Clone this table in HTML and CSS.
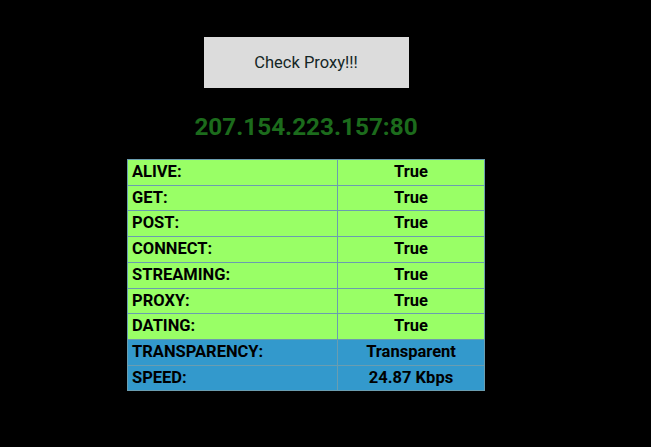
FILE: index.html
```html
<!DOCTYPE html>
<html>
<head>
<meta charset="utf-8">
<link rel="stylesheet" href="styles.css">
</head>
<body>
<div class="wrap">
  <button class="check">Check Proxy!!!</button>
  <h2 class="ip">207.154.223.157:80</h2>
  <table class="results">
    <tr class="ok"><td>ALIVE:</td><td class="val">True</td></tr>
    <tr class="ok"><td>GET:</td><td class="val">True</td></tr>
    <tr class="ok"><td>POST:</td><td class="val">True</td></tr>
    <tr class="ok"><td>CONNECT:</td><td class="val">True</td></tr>
    <tr class="ok"><td>STREAMING:</td><td class="val">True</td></tr>
    <tr class="ok"><td>PROXY:</td><td class="val">True</td></tr>
    <tr class="ok"><td>DATING:</td><td class="val">True</td></tr>
    <tr class="info"><td>TRANSPARENCY:</td><td class="val">Transparent</td></tr>
    <tr class="info"><td>SPEED:</td><td class="val">24.87 Kbps</td></tr>
  </table>
</div>
</body>
</html>
```
FILE: styles.css
```css
html, body {
  background: #000;
}
body {
  margin: 8px;
  font-family: Roboto, "Liberation Sans", sans-serif;
}
.wrap {
  width: 596px;
  padding-top: 29px;
  display: flex;
  flex-direction: column;
  align-items: center;
}
.check {
  width: 205px;
  height: 51px;
  background: #dcdcdc;
  border: none;
  font-family: Roboto, "Liberation Sans", sans-serif;
  font-size: 16.5px;
  color: #142626;
  padding: 0;
}
.ip {
  margin: 22px 0 16px;
  font-size: 24.3px;
  line-height: 33px;
  font-weight: 700;
  color: #1c6b1c;
}
.results {
  border-collapse: collapse;
  width: 358px;
}
.results td {
  border: 1px solid #6a9db0;
  padding: 3px 4px;
  line-height: 18.7px;
  font-size: 16.5px;
  font-weight: 700;
  color: #000;
  width: 201px;
}
.results td.val {
  text-align: center;
  width: auto;
}
.ok td {
  background: #99ff66;
}
.info td {
  background: #3399cc;
}
```
